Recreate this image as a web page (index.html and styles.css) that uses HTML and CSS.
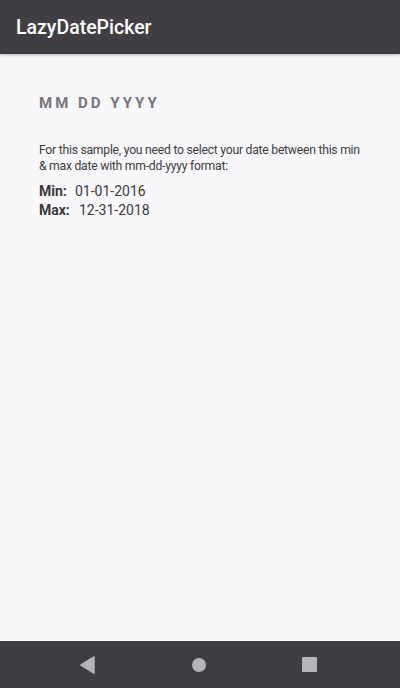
FILE: index.html
```html
<!DOCTYPE html>
<html>
<head>
<meta charset="utf-8">
<link rel="stylesheet" href="styles.css">
</head>
<body>
<div class="screen">
  <header class="appbar">LazyDatePicker</header>
  <main class="content">
    <div class="picker">MM&nbsp;DD&nbsp;YYYY</div>
    <p class="desc">For this sample, you need to select your date between this min &amp; max date with mm-dd-yyyy format:</p>
    <div class="row"><span class="label">Min:</span><span class="val">01-01-2016</span></div>
    <div class="row"><span class="label">Max:</span><span class="val">12-31-2018</span></div>
  </main>
  <nav class="navbar">
    <svg class="nav-icon" width="16" height="18" viewBox="0 0 16 18"><path d="M14 1 L1 9 L14 17 Z" fill="#b5b4b8" stroke="#b5b4b8" stroke-width="1.5" stroke-linejoin="round"/></svg>
    <span class="nav-circle"></span>
    <span class="nav-square"></span>
  </nav>
</div>
</body>
</html>
```

FILE: styles.css
```css
html, body {
  margin: 0;
  padding: 0;
}
body {
  font-family: Roboto, "Noto Sans", sans-serif;
  background: #f8f7fa;
}
.screen {
  width: 400px;
  height: 688px;
  display: flex;
  flex-direction: column;
}
.appbar {
  height: 54px;
  flex: none;
  background: #403e42;
  color: #ffffff;
  font-size: 19.5px;
  font-weight: 500;
  display: flex;
  align-items: center;
  padding-left: 16px;
  box-shadow: 0 1px 3px rgba(0,0,0,0.25);
}
.content {
  flex: 1;
  padding: 40px 36px 0 39px;
}
.picker {
  font-size: 15px;
  font-weight: 700;
  color: #77767a;
  letter-spacing: 3px;
  line-height: 18px;
}
.desc {
  margin: 30px 0 0 0;
  font-size: 12.2px;
  letter-spacing: -0.25px;
  line-height: 16px;
  color: #3d3c40;
}
.row {
  font-size: 14px;
  line-height: 19px;
  color: #3a393d;
  display: flex;
}
.desc + .row {
  margin-top: 8px;
}
.label {
  font-weight: 700;
  width: 36px;
}
.row + .row .label {
  width: 40px;
}
.navbar {
  height: 47px;
  flex: none;
  background: #403e42;
  display: flex;
  align-items: center;
  justify-content: center;
  gap: 0;
}
.nav-icon {
  margin-right: 96px;
  margin-left: -3px;
}
.nav-circle {
  width: 14px;
  height: 14px;
  border-radius: 50%;
  background: #b5b4b8;
  margin-right: 96px;
}
.nav-square {
  width: 15px;
  height: 15px;
  border-radius: 1px;
  background: #b5b4b8;
}
```
